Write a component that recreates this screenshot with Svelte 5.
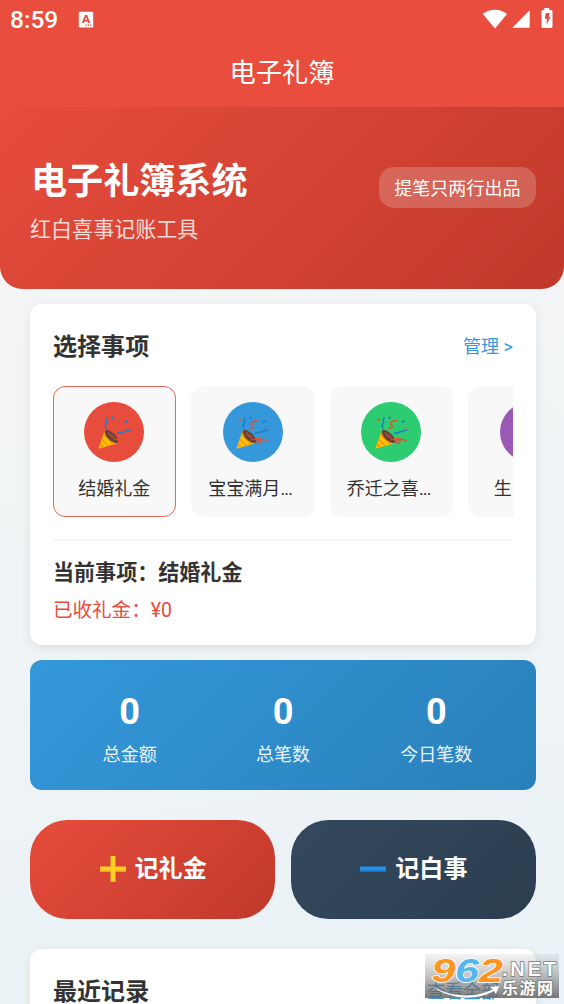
<script>
  const events = [
    { name: '结婚礼金', color: '#e74c3c', active: true },
    { name: '宝宝满月', more: true, color: '#3498db' },
    { name: '乔迁之喜', more: true, color: '#2ecc71' },
    { name: '生日礼金', color: '#9b59b6' }
  ];
  const stats = [
    { value: 0, label: '总金额' },
    { value: 0, label: '总笔数' },
    { value: 0, label: '今日笔数' }
  ];
</script>

<div class="page">
  <div class="top">
    <div class="status">
      <span class="clock">8:59</span>
      <svg class="badge" width="16" height="17" viewBox="0 0 16 17">
        <rect x="0.8" y="0.8" width="14.4" height="15.8" rx="1.4" fill="#fff" />
        <path d="M3.900 12 7 4h2.200l3 8h-2l-.5-1.600H6.400L5.900 12zM6.900 8.900h2.300L8.050 5.800z" fill="#e74c3c" />
        <path d="M7.500 14.200h1.400M9.900 14.200h1.400M12.200 14.200h1.400" stroke="#e74c3c" stroke-width="1.200" />
      </svg>
      <span class="spacer"></span>
      <svg width="26" height="20" viewBox="0 0 26 20"><path d="M.8 5.100C7.500-.8 18.300-.8 25 5.100L13 19.400z" fill="#fff" /></svg>
      <svg class="signal" width="18" height="18" viewBox="0 0 18 18"><path d="M17.700.3v17.400H.3z" fill="#fff" /></svg>
      <svg class="battery" width="12" height="21" viewBox="0 0 12 21">
        <path d="M3.200 0h5v2H10q1.500 0 1.500 1.500v15Q11.500 20 10 20H2Q.5 20 .5 18.500v-15Q.5 2 2 2h1.200z" fill="#fff" />
        <path d="M4.700 5h4L7.800 9h1.700l-4.100 8 .7-6.200H3.800z" fill="#e74c3c" />
      </svg>
    </div>
    <div class="nav">电子礼簿</div>
  </div>

  <header class="hero">
    <div>
      <h1>电子礼簿系统</h1>
      <p>红白喜事记账工具</p>
    </div>
    <span class="pill">提笔只两行出品</span>
  </header>

  <main>
    <section class="card">
      <div class="card-head">
        <h2>选择事项</h2>
        <span class="link">管理 &gt;</span>
      </div>
      <div class="events">
        {#each events as e}
          <div class="event" class:active={e.active}>
            <div class="circle" style="background:{e.color}">
              <svg width="34" height="35" viewBox="0 0 34 35" fill="none" stroke-linecap="round">
                <path d="M7.800 15.500 1.300 33.800 20.500 28.200z" fill="#ffc107" />
                <path d="m6.700 19.500 9 9.400M5 24.500l6 5.800M3.200 29.500l3 2.600" stroke="#f59a00" stroke-width="1.700" />
                <ellipse cx="14.400" cy="21.500" rx="8.800" ry="3.800" transform="rotate(44 14.400 21.500)" fill="#6d4037" />
                <path d="m11.500 18 2.500 3.200m1-.7 2.500 4" stroke="#a5513d" stroke-width="1.500" />
                <path d="M9 13c-3-2.500 2-4 .5-7-1-1.500.5-2 .7-3M20.500 18.500c2-2.500 3 .8 4.600-1.300s2.300.7 3.900-1.200 2.300.3 3.800-.8" stroke="#247bc5" stroke-width="1.500" />
                <path d="M15 13c4 1 4-2 2-3s.5-4.800 5.500-4.500M19 24.500c5-2 7-1 7 1.500s-4 3.500-4 .8 6-3.500 10.500-.6" stroke="#dd5431" stroke-width="1.500" />
                <path d="m14 3 1.800-2 1.200 2-1.600 1zm13 4 2.500-2 1.500 1-2 2.200z" fill="#247bc5" />
                <path d="m3 4 2.500-.5.500 2-2 .5zm29 8 1.500 1-1 1-1.500-1z" fill="#dd5431" />
              </svg>
            </div>
            <span class:clipped={e.more}>{e.name}{#if e.more}<span class="dots">...</span>{/if}</span>
          </div>
        {/each}
      </div>
      <div class="current">
        <strong>当前事项：结婚礼金</strong>
        <span>已收礼金：¥0</span>
      </div>
    </section>

    <section class="stats">
      {#each stats as s}
        <div class="stat"><b>{s.value}</b><span>{s.label}</span></div>
      {/each}
    </section>

    <div class="actions">
      <button class="gift">
        <svg width="28" height="28" viewBox="0 0 28 28"><path d="M11.500 1h5v10.500H27v5H16.500V27h-5V16.500H1v-5h10.500z" fill="#fdd026" /><path d="M1 15.300h10.500v1.200H1zm15.500 0H27v1.200H16.500zm-5 10.500h5V27h-5z" fill="#f5b51b" /></svg>
        记礼金
      </button>
      <button class="white-event">
        <svg width="28" height="28" viewBox="0 0 28 28"><path d="M1 11.500h26v5H1z" fill="#2490e8" /><path d="M1 15.200h26v1.300H1z" fill="#1678cf" /></svg>
        记白事
      </button>
    </div>

    <section class="card recent">
      <div class="card-head">
        <h2>最近记录</h2>
        <span class="link all">查看全部 &gt;</span>
      </div>
    </section>
  </main>

  <div class="mark">
    <svg width="134" height="44" viewBox="0 0 134 44">
      <defs>
        <linearGradient id="shade" x2="0" y2="1"><stop stop-color="#777" stop-opacity=".08" /><stop offset=".5" stop-color="#666" stop-opacity=".4" /><stop offset="1" stop-color="#666" stop-opacity=".88" /></linearGradient>
      </defs>
      <rect width="134" height="44" fill="url(#shade)" />
      <g class="digits">
        <text x="6.500" y="27.500" fill="#ff941f" textLength="24" lengthAdjust="spacingAndGlyphs">9</text>
        <text x="30" y="27.500" fill="#55b6ef" textLength="24" lengthAdjust="spacingAndGlyphs">6</text>
        <text x="54" y="27.500" fill="#ff941f" textLength="24" lengthAdjust="spacingAndGlyphs">2</text>
      </g>
      <path d="M7 32C28 45 54 43 68 35l-3-2 9-1-3 8-2-3C51 47 25 46 7 32z" fill="#fff" />
      <text class="net" x="77" y="22" textLength="54">.NET</text>
      <text class="site" x="77" y="39.500" textLength="51">乐游网</text>
    </svg>
  </div>
</div>

<style>
  :global(body) { margin: 0; }
  .page {
    position: relative;
    height: 1004px;
    overflow: hidden;
    box-sizing: border-box;
    font-family: Roboto, "Noto Sans CJK SC", sans-serif;
    color: #333;
    background: linear-gradient(170deg, #f5f5f5 20%, #e9f2f6 100%);
  }
  .top { height: 107px; background: #e84d3d; color: #fff; }
  .status { display: flex; align-items: center; height: 38px; padding: 0 12px 0 10px; }
  .clock { font-size: 24.5px; font-weight: 500; line-height: 38px; width: 48px; padding-top: 1px; }
  .badge { margin-left: 20px; }
  .spacer { flex: 1; }
  .signal { margin: 0 11.500px 0 3.500px; }
  .battery { margin: -2px -1px 0 0; }
  .nav { text-align: center; font-size: 26.3px; line-height: 70px; }
  .hero {
    display: flex;
    justify-content: space-between;
    align-items: center;
    box-sizing: border-box;
    height: 182px;
    padding: 0 28px 0 30px;
    border-radius: 0 0 22.5px 22.5px;
    background: linear-gradient(135deg, #e74c3c, #c0392b);
    color: #fff;
  }
  .hero > div { padding-top: 4px; }
  h1, h2, p { margin: 0; }
  h1 { font-size: 36.1px; line-height: 52px; padding-left: 1px; font-weight: 700; }
  .hero p { margin-top: 7px; font-size: 21.05px; line-height: 30px; opacity: .8; }
  .pill {
    padding: 2px 15.5px 0 15px;
    margin-bottom: 21px;
    border-radius: 15px;
    background: rgba(255, 255, 255, .2);
    font-size: 18.05px;
    line-height: 39px;
  }
  main { padding: 15px 28px 0 30px; }
  .card {
    height: 341px;
    box-sizing: border-box;
    padding: 23px 23px 0 22.5px;
    border-radius: 12px;
    background: #fff;
    box-shadow: 0 3px 12px rgba(0, 0, 0, .08);
  }
  .card-head { display: flex; justify-content: space-between; align-items: center; height: 36px; }
  h2 { font-size: 24.06px; line-height: 36px; font-weight: 700; padding: 3px 0 0 .5px; }
  .link { color: #3498db; font-size: 18.05px; }
  .events { display: flex; gap: 15px; margin-top: 23px; overflow: hidden; }
  .event {
    flex: 0 0 123.500px;
    height: 131px;
    box-sizing: border-box;
    padding-top: 15px;
    border: 1px solid #f8f8f8;
    border-radius: 12px;
    background: #f8f8f8;
    display: flex;
    flex-direction: column;
    align-items: center;
    font-size: 18.05px;
    line-height: 26px;
    white-space: nowrap;
  }
  .event.active { border-color: #e0695b; }
  .clipped { margin-right: 5px; }
  .dots { letter-spacing: -.8px; }
  .circle { width: 60px; height: 60px; border-radius: 50%; margin-bottom: 14px; display: flex; align-items: center; justify-content: center; }
  .circle svg { margin-right: 1px; }
  .current { margin-top: 22px; border-top: 2px solid #f6f6f6; padding-top: 16px; display: flex; flex-direction: column; }
  .current strong { font-size: 21.05px; line-height: 32px; padding-left: .5px; }
  .current span { margin-top: 7px; font-size: 19.55px; line-height: 30px; padding-left: .5px; color: #e74c3c; }
  .stats {
    display: flex;
    box-sizing: border-box;
    height: 130px;
    margin-top: 15px;
    padding: 30px 23px 0;
    border-radius: 12px;
    background: linear-gradient(135deg, #3498db, #2980b9);
    color: #fff;
  }
  .stat { flex: 1; display: flex; flex-direction: column; align-items: center; }
  .stat b { font-size: 36.1px; line-height: 44px; }
  .stat span { margin-top: 8px; font-size: 18.05px; line-height: 26px; opacity: .9; }
  .actions { display: flex; gap: 15.500px; margin: 30px 0; }
  button {
    flex: 1;
    height: 99px;
    padding: 0 0 1px;
    border: 0;
    border-radius: 37.6px;
    display: flex;
    align-items: center;
    justify-content: center;
    gap: 8px;
    font: 700 24.06px/36px Roboto, "Noto Sans CJK SC", sans-serif;
    color: #fff;
  }
  button svg { margin-top: 0; }
  .gift { background: linear-gradient(135deg, #e74c3c, #c0392b); }
  .white-event { background: linear-gradient(135deg, #34495e, #2c3e50); }
  .recent { padding-top: 23px; }
  .mark { position: absolute; left: 425px; top: 954px; width: 134px; height: 44px; }
  .mark svg { display: block; }
  .digits { font: italic 700 34px "Liberation Sans", sans-serif; stroke: #fff; stroke-width: 1.5px; paint-order: stroke; }
  .net, .site { fill: #fff; stroke: #777; stroke-width: 1.5px; paint-order: stroke; }
  .net { font: 700 20px "Liberation Sans", sans-serif; }
  .site { font: 700 16px "Noto Sans CJK SC", sans-serif; }
</style>
